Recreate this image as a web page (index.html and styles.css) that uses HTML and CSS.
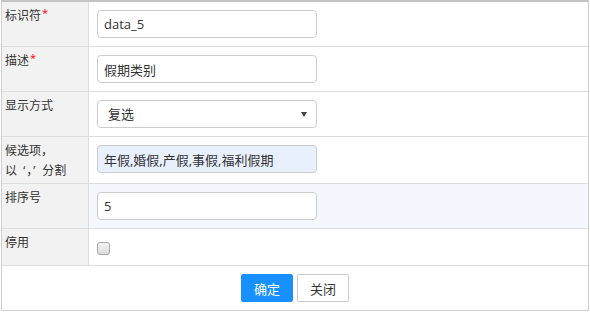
FILE: index.html
```html
<!DOCTYPE html>
<html lang="zh-CN">
<head>
  <meta charset="UTF-8" />
  <title>编辑字段</title>
  <link rel="stylesheet" href="styles.css">
</head>
<body>
  <div class="panel">
    <div class="form">
      <div class="label">标识符<span class="req">*</span></div>
      <div class="value"><input class="field" type="text" value="data_5" /></div>

      <div class="label">描述<span class="req">*</span></div>
      <div class="value"><input class="field" type="text" value="假期类别" /></div>

      <div class="label">显示方式</div>
      <div class="value">
        <div class="select-wrap">
          <select class="field select">
            <option>复选</option>
            <option>单选</option>
            <option>下拉</option>
          </select>
        </div>
      </div>

      <div class="label">候选项，<br>以 <span class="sep">‘，’</span> 分割</div>
      <div class="value"><input class="field filled" type="text" value="年假,婚假,产假,事假,福利假期" /></div>

      <div class="label">排序号</div>
      <div class="value hover"><input class="field" type="text" value="5" /></div>

      <div class="label">停用</div>
      <div class="value"><input class="check" type="checkbox" /></div>
    </div>

    <div class="footer">
      <button class="btn btn-primary">确定</button>
      <button class="btn">关闭</button>
    </div>
  </div>
</body>
</html>
```

FILE: styles.css
```css
body {
  margin: 0;
  font-family: "Open Sans", "Noto Sans CJK SC", sans-serif;
  color: #333;
  background: #fff;
}

.panel {
  margin: 0 1px;
  border: 1px solid #cfcfcf;
  border-top: 2px solid #c4c4c4;
}

.form {
  display: grid;
  grid-template-columns: 87px 1fr;
}

.label {
  box-sizing: border-box;
  background: #f2f2f2;
  border-right: 1px solid #ddd;
  border-bottom: 1px solid #ddd;
  padding: 4px 3px 2px;
  font-size: 12px;
  line-height: 20px;
  color: #333;
}

.sep {
  margin: 0 3px;
  letter-spacing: 1px;
}

.req {
  color: #f00;
  font-size: 11px;
  margin-left: 1px;
  position: relative;
  top: -3px;
}

.value {
  border-bottom: 1px solid #ddd;
  padding: 8px;
}

.value.hover {
  background: #f4f8fe;
}

.field {
  display: block;
  box-sizing: border-box;
  width: 220px;
  height: 28px;
  margin: 0;
  padding: 0 6px;
  border: 1px solid #ccc;
  border-radius: 4px;
  background: #fff;
  font-family: "Open Sans", "Noto Sans CJK SC", sans-serif;
  font-size: 13px;
  color: #333;
  outline: none;
}

.field.filled {
  background: #e8f0fe;
}

.select-wrap {
  position: relative;
  width: 220px;
}

.select {
  appearance: none;
  -webkit-appearance: none;
  padding-left: 10px;
}

.select-wrap::after {
  content: "";
  position: absolute;
  right: 10px;
  top: 12px;
  border-left: 3px solid transparent;
  border-right: 3px solid transparent;
  border-top: 5px solid #444;
}

.check {
  appearance: none;
  -webkit-appearance: none;
  display: block;
  box-sizing: border-box;
  width: 13px;
  height: 13px;
  margin: 5px 0 2px;
  border: 1px solid #a6a6a6;
  border-radius: 3px;
  background: linear-gradient(#f4f4f4, #dcdcdc);
}

.footer {
  padding: 8px;
  text-align: center;
  font-size: 0;
}

.btn {
  height: 28px;
  padding: 0 12px;
  margin: 0 2px;
  border: 1px solid #ccc;
  border-radius: 2px;
  background: #fff;
  color: #333;
  font-family: "Noto Sans CJK SC", sans-serif;
  font-size: 13px;
  cursor: pointer;
}

.btn-primary {
  background: #1890ff;
  border-color: #1890ff;
  color: #fff;
}
```
